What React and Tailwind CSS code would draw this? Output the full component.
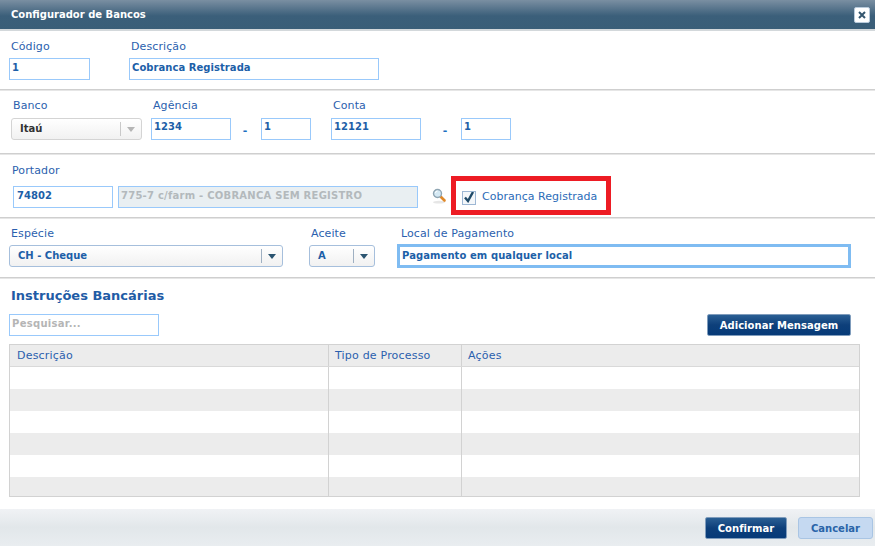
function Label({ children, className = "" }) {
  return <div className={`text-[11px] leading-[14px] tracking-[0.1px] text-[#2b5fae] ${className}`}>{children}</div>;
}

// cada campo passa as próprias cores, senão as classes arbitrárias brigam entre si
function Input({
  value,
  className = "",
  tone = "bg-white text-[#1d5fa8] tracking-[0.05px]",
  leading = "leading-[18px]",
  pad = "px-[2px]",
}) {
  return (
    <div className={`block h-[22px] border border-[#99c9fb] text-[10px] font-bold whitespace-nowrap ${pad} ${leading} ${tone} ${className}`}>
      {value}
    </div>
  );
}

function Field({ label, labelClass = "", children, className = "" }) {
  return (
    <div className={className}>
      <Label className={labelClass}>{label}</Label>
      {children}
    </div>
  );
}

function Arrow({ color }) {
  return (
    <svg width="8" height="5" viewBox="0 0 8 5" className="block">
      <path d="M0 0h8L4 5z" fill={color} />
    </svg>
  );
}

function Select({ value, width, disabled }) {
  return (
    <div
      className={`flex h-[22px] items-center rounded-[3px] border bg-gradient-to-b from-white to-[#f1f1f1] text-[10px] font-bold ${width} ${
        disabled ? "border-[#d4d4d4] text-[#333333]" : "border-[#a6bfdc] text-[#1d5fa8]"
      }`}
    >
      <span className="flex-1 pb-[2px] pl-[8px]">{value}</span>
      <span className={`h-[14px] w-px ${disabled ? "bg-[#c9c9c9]" : "bg-[#9fb0c2]"}`} />
      <span className="flex w-[20px] justify-center">
        <Arrow color={disabled ? "#b5b5b5" : "#2a5470"} />
      </span>
    </div>
  );
}

function Dash({ className = "" }) {
  return <div className={`pt-[25px] text-center text-[11px] font-bold leading-[14px] text-[#1d6fc0] ${className}`}>-</div>;
}

function Divider() {
  return <div className="h-[2px] border-b border-[#e6e6e6] bg-[#cfcfcf]" />;
}

function SearchIcon() {
  return (
    <svg width="15" height="16" viewBox="0 0 15 16" className="block">
      <ellipse cx="7" cy="14.2" rx="6" ry="1.4" fill="#e6e6e6" />
      <path d="M8.5 8.5l4 4" stroke="#e0892a" strokeWidth="2.6" strokeLinecap="round" />
      <circle cx="5.5" cy="5.5" r="4" fill="#d5e9f4" stroke="#8fa5b3" strokeWidth="1.4" />
      <path d="M3.5 5a2 2 0 0 1 2-2" stroke="#ffffff" strokeWidth="1" fill="none" />
    </svg>
  );
}

function DarkButton({ children, className = "" }) {
  return (
    <div
      className={`flex h-[22px] items-center justify-center rounded-[2px] border border-[#7f9cbc] bg-gradient-to-b from-[#2a5f94] via-[#0d3f7a] to-[#063a78] text-[10px] font-bold tracking-[0.05px] text-white ${className}`}
    >
      {children}
    </div>
  );
}

const rows = [0, 1, 2, 3, 4, 5];

export default function App() {
  return (
    <div className="h-[547px] w-[875px] overflow-hidden bg-white font-['DejaVu_Sans','Liberation_Sans',sans-serif]">
      {/* Header */}
      <div className="flex h-[29px] items-center justify-between bg-gradient-to-b from-[#7a8fa2] via-[#3b5f7a] via-55% to-[#3a5e78] pl-[11px] pr-[5px]">
        <span className="text-[10px] font-bold text-white">Configurador de Bancos</span>
        <span className="flex h-[16px] w-[16px] items-center justify-center rounded-[2px] border border-[#b9cbdc] bg-white">
          <svg width="8" height="8" viewBox="0 0 8 8">
            <path d="M1 1l6 6M7 1L1 7" stroke="#34566f" strokeWidth="2" />
          </svg>
        </span>
      </div>
      <div className="h-[2px] bg-[#d3d8db]" />

      {/* Código / Descrição */}
      <div className="flex h-[58px] gap-[39px] pl-[9px] pt-[9px]">
        <Field label="Código" labelClass="pl-[2px]" className="w-[81px]">
          <Input value="1" className="mt-[4px] w-[81px]" />
        </Field>
        <Field label="Descrição" labelClass="pl-[2px]">
          <Input value="Cobranca Registrada" className="mt-[4px] w-[250px]" />
        </Field>
      </div>
      <Divider />

      {/* Banco / Agência / Conta */}
      <div className="flex h-[62px] pl-[11px] pt-[8px]">
        <Field label="Banco" labelClass="pl-[2px]" className="mr-[9px]">
          <div className="mt-[5px]">
            <Select value="Itaú" width="w-[131px]" disabled />
          </div>
        </Field>
        <Field label="Agência" labelClass="pl-[2px]">
          <Input value="1234" leading="leading-[16px]" className="mt-[5px] w-[80px]" />
        </Field>
        <Dash className="w-[30px] pr-[2px]" />
        <Field label={"\u00A0"}>
          <Input value="1" leading="leading-[16px]" className="mt-[5px] w-[50px]" />
        </Field>
        <div className="w-[20px]" />
        <Field label="Conta" labelClass="pl-[2px]">
          <Input value="12121" leading="leading-[16px]" className="mt-[5px] w-[90px]" />
        </Field>
        <Dash className="w-[40px] pl-[8px]" />
        <Field label={"\u00A0"}>
          <Input value="1" leading="leading-[16px]" className="mt-[5px] w-[50px]" />
        </Field>
      </div>
      <Divider />

      {/* Portador */}
      <div className="flex h-[62px] pl-[13px]">
        <div className="pt-[9px]">
          <Label className="-ml-px">Portador</Label>
          <div className="mt-[8px] flex gap-[5px]">
            <Input value="74802" pad="px-[3px]" leading="leading-[17px]" className="w-[100px]" />
            <Input
              value="775-7 c/farm - COBRANCA SEM REGISTRO"
              tone="bg-[#e9eff2] text-[#b3b9bc] tracking-[0.24px]"
              leading="leading-[17px]"
              className="w-[300px]"
            />
          </div>
        </div>
        <div className="ml-[14px] pt-[33px]">
          <SearchIcon />
        </div>
        <div className="ml-[4px] mt-[21px] flex h-[39px] w-[160px] items-center border-[5px] border-[#ed1c24] pl-[6px] pt-[4px]">
          <span className="flex h-[14px] w-[14px] items-center justify-center border border-[#9db7d4] bg-[#f4f7fa]">
            <svg width="12" height="11" viewBox="0 0 12 11">
              <path d="M2 5.5l3 3.5 5-9" stroke="#1f4a68" strokeWidth="2.4" fill="none" />
            </svg>
          </span>
          <span className="ml-[6px] whitespace-nowrap text-[11px] tracking-[0.02px] text-[#2b6cb8]">Cobrança Registrada</span>
        </div>
      </div>
      <Divider />

      {/* Espécie / Aceite / Local */}
      <div className="flex h-[58px] pl-[9px] pt-[8px]">
        <Field label="Espécie" labelClass="pl-[2px]" className="mr-[26px]">
          <div className="mt-[4px]">
            <Select value="CH - Cheque" width="w-[274px]" />
          </div>
        </Field>
        <Field label="Aceite" labelClass="pl-[2px]" className="mr-[22px]">
          <div className="mt-[4px]">
            <Select value="A" width="w-[66px]" />
          </div>
        </Field>
        <Field label="Local de Pagamento" labelClass="pl-[4px]">
          <div className="mt-[3px] h-[24px] w-[454px] border-[3px] border-[#7fbcf2] px-[2px] text-[10px] font-bold leading-[17px] tracking-[0.08px] text-[#1d5fa8]">
            Pagamento em qualquer local
          </div>
        </Field>
      </div>
      <Divider />

      {/* Instruções Bancárias */}
      <div className="h-[230px] pl-[9px]">
        <h2 className="pl-[2px] pt-[8px] text-[13px] font-bold leading-[17px] text-[#1f5ca6]">Instruções Bancárias</h2>
        <div className="mt-[10px] flex w-[842px] items-center justify-between">
          <Input value="Pesquisar..." tone="bg-white text-[#b5b5b5] tracking-[0.3px]" className="w-[150px]" />
          <DarkButton className="w-[144px]">Adicionar Mensagem</DarkButton>
        </div>
        <div className="mt-[8px] w-[851px] border border-[#d2d2d2]">
          <div className="flex h-[22px] items-center border-b border-[#d9d9d9] bg-[#ececec] text-[11px] tracking-[0.2px] text-[#2b5fae]">
            <div className="h-full w-[319px] border-r border-[#d2d2d2] pl-[7px] leading-[21px]">Descrição</div>
            <div className="h-full w-[133px] border-r border-[#d2d2d2] pl-[6px] leading-[21px]">Tipo de Processo</div>
            <div className="h-full flex-1 pl-[6px] leading-[21px]">Ações</div>
          </div>
          {rows.map((r) => (
            <div key={r} className={`flex ${r === 5 ? "h-[19px]" : "h-[22px]"} ${r % 2 ? "bg-[#ececec]" : "bg-white"}`}>
              <div className="w-[319px] border-r border-[#d2d2d2]" />
              <div className="w-[133px] border-r border-[#d2d2d2]" />
              <div className="flex-1" />
            </div>
          ))}
        </div>
      </div>

      {/* Footer */}
      <div className="flex h-[37px] items-start justify-end gap-[11px] bg-gradient-to-b from-[#f0f2f5] via-[#e2e7ea] to-[#e9edf0] pr-[2px] pt-[8px]">
        <DarkButton className="w-[82px]">Confirmar</DarkButton>
        <div className="flex h-[22px] w-[75px] items-center justify-center rounded-[3px] border border-[#a9c5e4] bg-[#c5d9f1] text-[10px] font-bold text-[#2a64a8]">
          Cancelar
        </div>
      </div>
    </div>
  );
}
